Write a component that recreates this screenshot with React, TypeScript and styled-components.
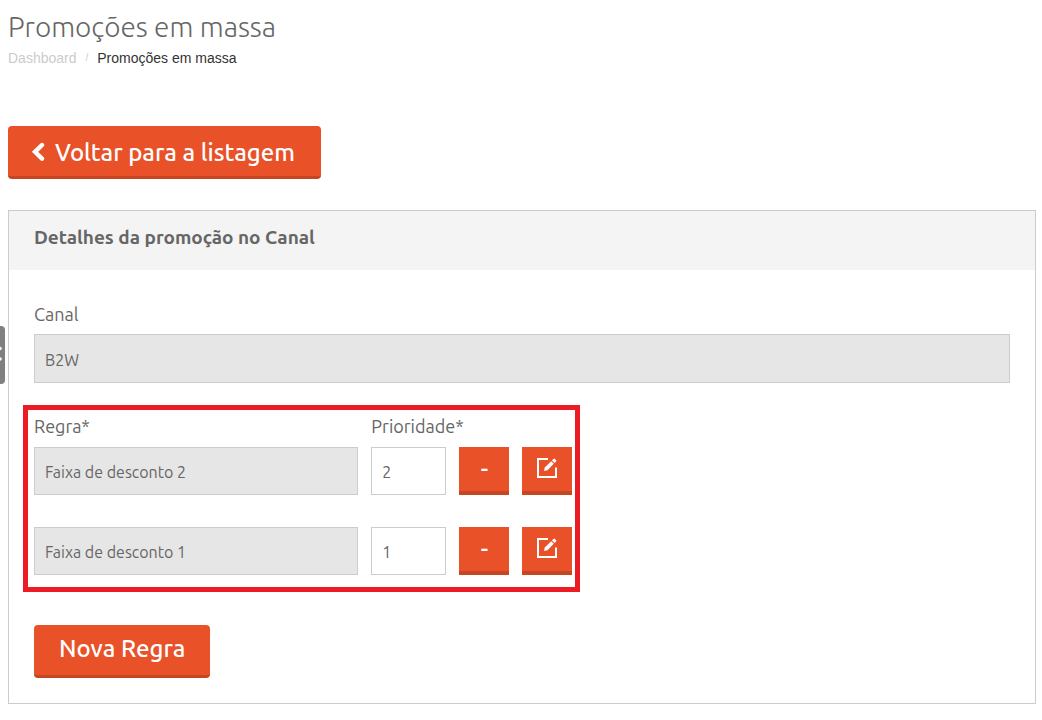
import React from "react";
import styled, { createGlobalStyle, css } from "styled-components";

const orange = "#e95128";
const orangeDark = "#c64522";
const textGray = "#666666";
const line = "#cccccc";

const GlobalStyle = createGlobalStyle`
  *, *::before, *::after { box-sizing: border-box; }
  body {
    margin: 0;
    background: #ffffff;
    color: ${textGray};
    font-family: Ubuntu, "Noto Sans", "Open Sans", sans-serif;
  }
`;

const Page = styled.main`
  padding: 8px 6px 16px 8px;
`;

const Title = styled.h1`
  margin: 0;
  font-size: 28px;
  font-weight: 300;
  line-height: 38px;
`;

const Breadcrumb = styled.nav`
  display: flex;
  align-items: center;
  gap: 9px;
  margin-bottom: 58px;
  padding-top: 2px;
  font: 14px/20px "Liberation Sans", Arial, sans-serif;
  color: #333333;
`;

const CrumbLink = styled.a`
  color: #cccccc;
  text-decoration: none;
`;

const Separator = styled.span`
  color: #cccccc;
  font-size: 10px;
`;

const buttonBase = css`
  border: 0;
  background: ${orange};
  color: #ffffff;
  font-family: inherit;
  font-size: 24px;
  font-weight: 500;
  cursor: pointer;
`;

const LargeButton = styled.button<{ $withIcon?: boolean }>`
  ${buttonBase}
  display: inline-flex;
  align-items: center;
  gap: 9px;
  height: 53px;
  padding: ${({ $withIcon }) => ($withIcon ? "3px 26px 0 23px" : "0 25px 3px")};
  border-bottom: 3px solid ${orangeDark};
  border-radius: 4px;
  line-height: 32px;
`;

const Panel = styled.section`
  margin-top: 31px;
  border: 1px solid ${line};
`;

const PanelHeader = styled.h2`
  margin: 0;
  padding: 12px 25px 19px;
  background: #f4f4f4;
  font-size: 19px;
  font-weight: 700;
  line-height: 28px;
`;

const PanelBody = styled.form`
  padding: 32px 25px 25px;
`;

const Label = styled.label`
  display: block;
  font-size: 18px;
  line-height: 24px;
`;

const Field = styled.input<{ $tall?: boolean }>`
  display: block;
  width: 100%;
  min-width: 0;
  height: ${({ $tall }) => ($tall ? "49px" : "48px")};
  padding: 2px 10px 0;
  border: 1px solid ${line};
  border-radius: 0;
  background: #ffffff;
  color: ${textGray};
  font-family: inherit;
  font-size: 16px;

  &:disabled {
    background: #e6e6e6;
    opacity: 1;
  }
`;

const ChannelGroup = styled.div`
  display: grid;
  gap: 8px;
  margin-bottom: 22px;
`;

const RulesBox = styled.div`
  width: calc(57% + 1px);
  min-width: 440px;
  margin-left: -11px;
  margin-bottom: 33px;
  padding: 4px 3px 12px 6px;
  border: 5px solid #ed1c24;
`;

const ruleColumns = css`
  display: grid;
  grid-template-columns: 1fr 75px 50px 50px;
  column-gap: 13px;
`;

const RuleLabels = styled.div`
  ${ruleColumns}
  margin-bottom: 9px;
  white-space: nowrap;
`;

const RuleRow = styled.div`
  ${ruleColumns}

  & + & {
    margin-top: 32px;
  }
`;

const SquareButton = styled.button`
  ${buttonBase}
  display: flex;
  align-items: center;
  justify-content: center;
  height: 48px;
  padding: 0 0 2px;
  border-bottom: 4px solid ${orangeDark};
`;

const SideHandle = styled.button`
  position: fixed;
  top: 326px;
  left: 0;
  width: 5px;
  height: 58px;
  padding: 0;
  border: 0;
  border-radius: 0 4px 4px 0;
  background: #808080;
  cursor: pointer;
`;

const HandleMark = styled.svg`
  display: block;
`;

const ChevronLeft = () => (
  <svg width="15" height="22" viewBox="0 0 15 22" aria-hidden="true">
    <path
      d="M11 3 4 9.8l7 6.8"
      fill="none"
      stroke="#fff"
      strokeWidth="4.4"
      strokeLinecap="round"
    />
  </svg>
);

const EditIcon = () => (
  <svg width="20" height="20" viewBox="0 0 20 20" aria-hidden="true">
    <path d="M11 1H1v18h18V9.5" fill="none" stroke="#fff" strokeWidth="2" />
    <path d="M7 13l.8-3.4 6.4-6.4 2.6 2.6-6.4 6.4z" fill="#fff" />
    <path d="M15 2.4 16.4 1q.8-.8 1.6 0l1 1q.8.8 0 1.6L17.6 5z" fill="#fff" />
  </svg>
);

const rules = [
  { name: "Faixa de desconto 2", priority: "2" },
  { name: "Faixa de desconto 1", priority: "1" },
];

export default function App() {
  return (
    <>
      <GlobalStyle />
      <SideHandle type="button" aria-label="Abrir menu lateral">
        <HandleMark width="5" height="58" viewBox="0 0 5 58" aria-hidden="true">
          <circle cx="0" cy="22.5" r="1.8" fill="#fff" />
          <circle cx="0" cy="33" r="1.8" fill="#fff" />
        </HandleMark>
      </SideHandle>
      <Page>
        <Title>Promoções em massa</Title>
        <Breadcrumb>
          <CrumbLink href="#">Dashboard</CrumbLink>
          <Separator>/</Separator>
          <span>Promoções em massa</span>
        </Breadcrumb>
        <LargeButton type="button" $withIcon>
          <ChevronLeft />
          Voltar para a listagem
        </LargeButton>
        <Panel>
          <PanelHeader>Detalhes da promoção no Canal</PanelHeader>
          <PanelBody>
            <ChannelGroup>
              <Label htmlFor="canal">Canal</Label>
              <Field id="canal" defaultValue="B2W" disabled $tall />
            </ChannelGroup>
            <RulesBox>
              <RuleLabels>
                <Label htmlFor="regra-0">Regra*</Label>
                <Label htmlFor="prioridade-0">Prioridade*</Label>
              </RuleLabels>
              {rules.map((rule, i) => (
                <RuleRow key={rule.name}>
                  <Field id={`regra-${i}`} aria-label="Regra" defaultValue={rule.name} disabled />
                  <Field id={`prioridade-${i}`} aria-label="Prioridade" defaultValue={rule.priority} />
                  <SquareButton type="button" aria-label="Remover regra">-</SquareButton>
                  <SquareButton type="button" aria-label="Editar regra">
                    <EditIcon />
                  </SquareButton>
                </RuleRow>
              ))}
            </RulesBox>
            <LargeButton type="button">Nova Regra</LargeButton>
          </PanelBody>
        </Panel>
      </Page>
    </>
  );
}
